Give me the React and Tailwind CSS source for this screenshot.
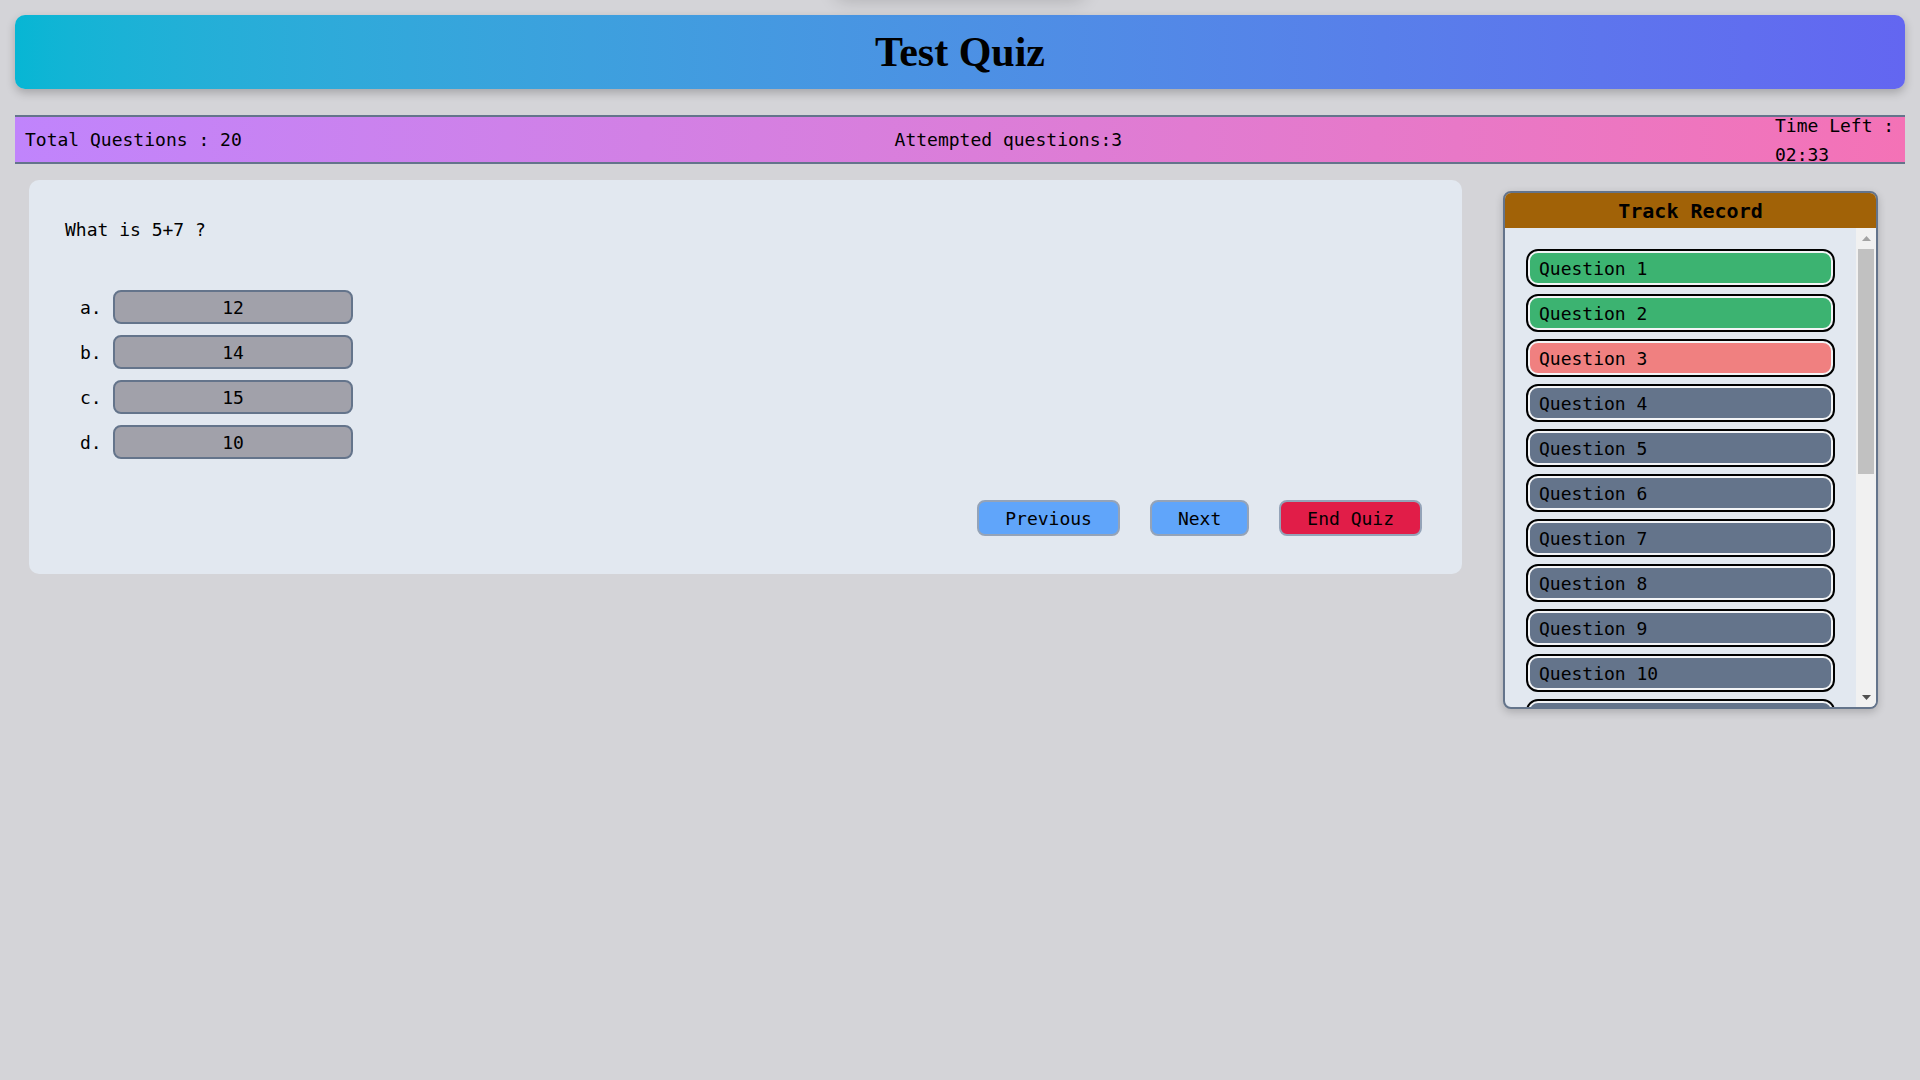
const questions = [
  { label: 'Question 1', status: 'correct' },
  { label: 'Question 2', status: 'correct' },
  { label: 'Question 3', status: 'wrong' },
  ...Array.from({ length: 17 }, (_, i) => ({ label: `Question ${i + 4}`, status: 'none' })),
];

const options = [
  { key: 'a.', value: '12' },
  { key: 'b.', value: '14' },
  { key: 'c.', value: '15' },
  { key: 'd.', value: '10' },
];

const statusColor = {
  correct: 'bg-[#3cb371]',
  wrong: 'bg-[#f08080]',
  none: 'bg-[#64748b]',
};

const App = () => {
  return (
    <div className="relative min-h-screen overflow-hidden bg-[#d4d4d8] font-['DejaVu_Sans_Mono',monospace] text-[18px] text-black">
      {/* toast sitting just above the viewport */}
      <div className="absolute top-[-50px] left-1/2 h-[50px] w-[250px] -translate-x-1/2 rounded-[10px] bg-[#d4d4d8] shadow-[0_0_18px_rgba(0,0,0,0.18)]" />

      <div className="px-[15px] pt-[15px]">
        <div className="flex h-[74px] items-center justify-center rounded-[10px] bg-gradient-to-r from-[#06b6d4] to-[#6366f1] shadow-[0_4px_10px_rgba(0,0,0,0.22)]">
          <h1 className="font-['Liberation_Serif',serif] text-[42px] font-bold leading-none">Test Quiz</h1>
        </div>

        <div className="mt-[26px] flex h-[49px] items-center justify-between border-y-2 border-[#64748b] bg-gradient-to-r from-[#c084fc] to-[#f472b6] px-[10px]">
          <span className="shrink-0">Total Questions : 20</span>
          <span className="shrink-0">Attempted questions:3</span>
          <span className="w-[120px] shrink-0 leading-[29px]">Time Left : 02:33</span>
        </div>
      </div>

      <div className="mt-[16px] flex items-start gap-[41px] pl-[29px] pr-[42px]">
        <div className="flex-1 rounded-[10px] bg-[#e2e8f0] pb-[38px] pl-[36px] pr-[40px] pt-[36px]">
          <p className="leading-[27px]">What is 5+7 ?</p>

          <div className="mt-[47px] flex flex-col gap-[11px] pl-[15px]">
            {options.map((opt) => (
              <div key={opt.key} className="flex items-center">
                <span className="w-[33px]">{opt.key}</span>
                <div className="flex h-[34px] w-[240px] items-center justify-center rounded-[8px] border-2 border-[#64748b] bg-[#a1a1aa]">
                  {opt.value}
                </div>
              </div>
            ))}
          </div>

          <div className="mt-[41px] flex justify-end gap-[30px]">
            <button className="h-[36px] rounded-[8px] border-2 border-[#94a3b8] bg-[#60a5fa] px-[26px]">Previous</button>
            <button className="h-[36px] rounded-[8px] border-2 border-[#94a3b8] bg-[#60a5fa] px-[26px]">Next</button>
            <button className="h-[36px] rounded-[8px] border-2 border-[#94a3b8] bg-[#e11d48] px-[26px]">End Quiz</button>
          </div>
        </div>

        <div className="mt-[11px] w-[375px] overflow-hidden rounded-[8px] border-2 border-[#64748b] bg-[#e2e8f0] shadow-[0_3px_8px_rgba(0,0,0,0.2)]">
          <div className="flex h-[35px] items-center justify-center bg-[#a16207] text-[20px] font-bold">Track Record</div>
          <div className="flex h-[479px]">
            <div className="flex-1 overflow-hidden p-[23px]">
              <div className="flex flex-col gap-[11px]">
                {questions.map((q) => (
                  <div
                    key={q.label}
                    className={`flex h-[34px] shrink-0 items-center rounded-[10px] border-2 border-[#f3f4f6] pl-[9px] outline-2 outline-black ${statusColor[q.status]}`}
                  >
                    {q.label}
                  </div>
                ))}
              </div>
            </div>

            {/* scrollbar */}
            <div className="flex w-[20px] flex-col bg-[#f1f1f1]">
              <div className="flex h-[20px] items-center justify-center">
                <svg width="9" height="5" viewBox="0 0 9 5"><path d="M4.5 0 L9 5 L0 5 Z" fill="#a3a3a3" /></svg>
              </div>
              <div className="mx-[2px] mt-[1px] h-[225px] bg-[#c1c1c1]" />
              <div className="flex-1" />
              <div className="flex h-[20px] items-center justify-center">
                <svg width="9" height="5" viewBox="0 0 9 5"><path d="M0 0 L9 0 L4.5 5 Z" fill="#505050" /></svg>
              </div>
            </div>
          </div>
        </div>
      </div>
    </div>
  );
};

export default App;
